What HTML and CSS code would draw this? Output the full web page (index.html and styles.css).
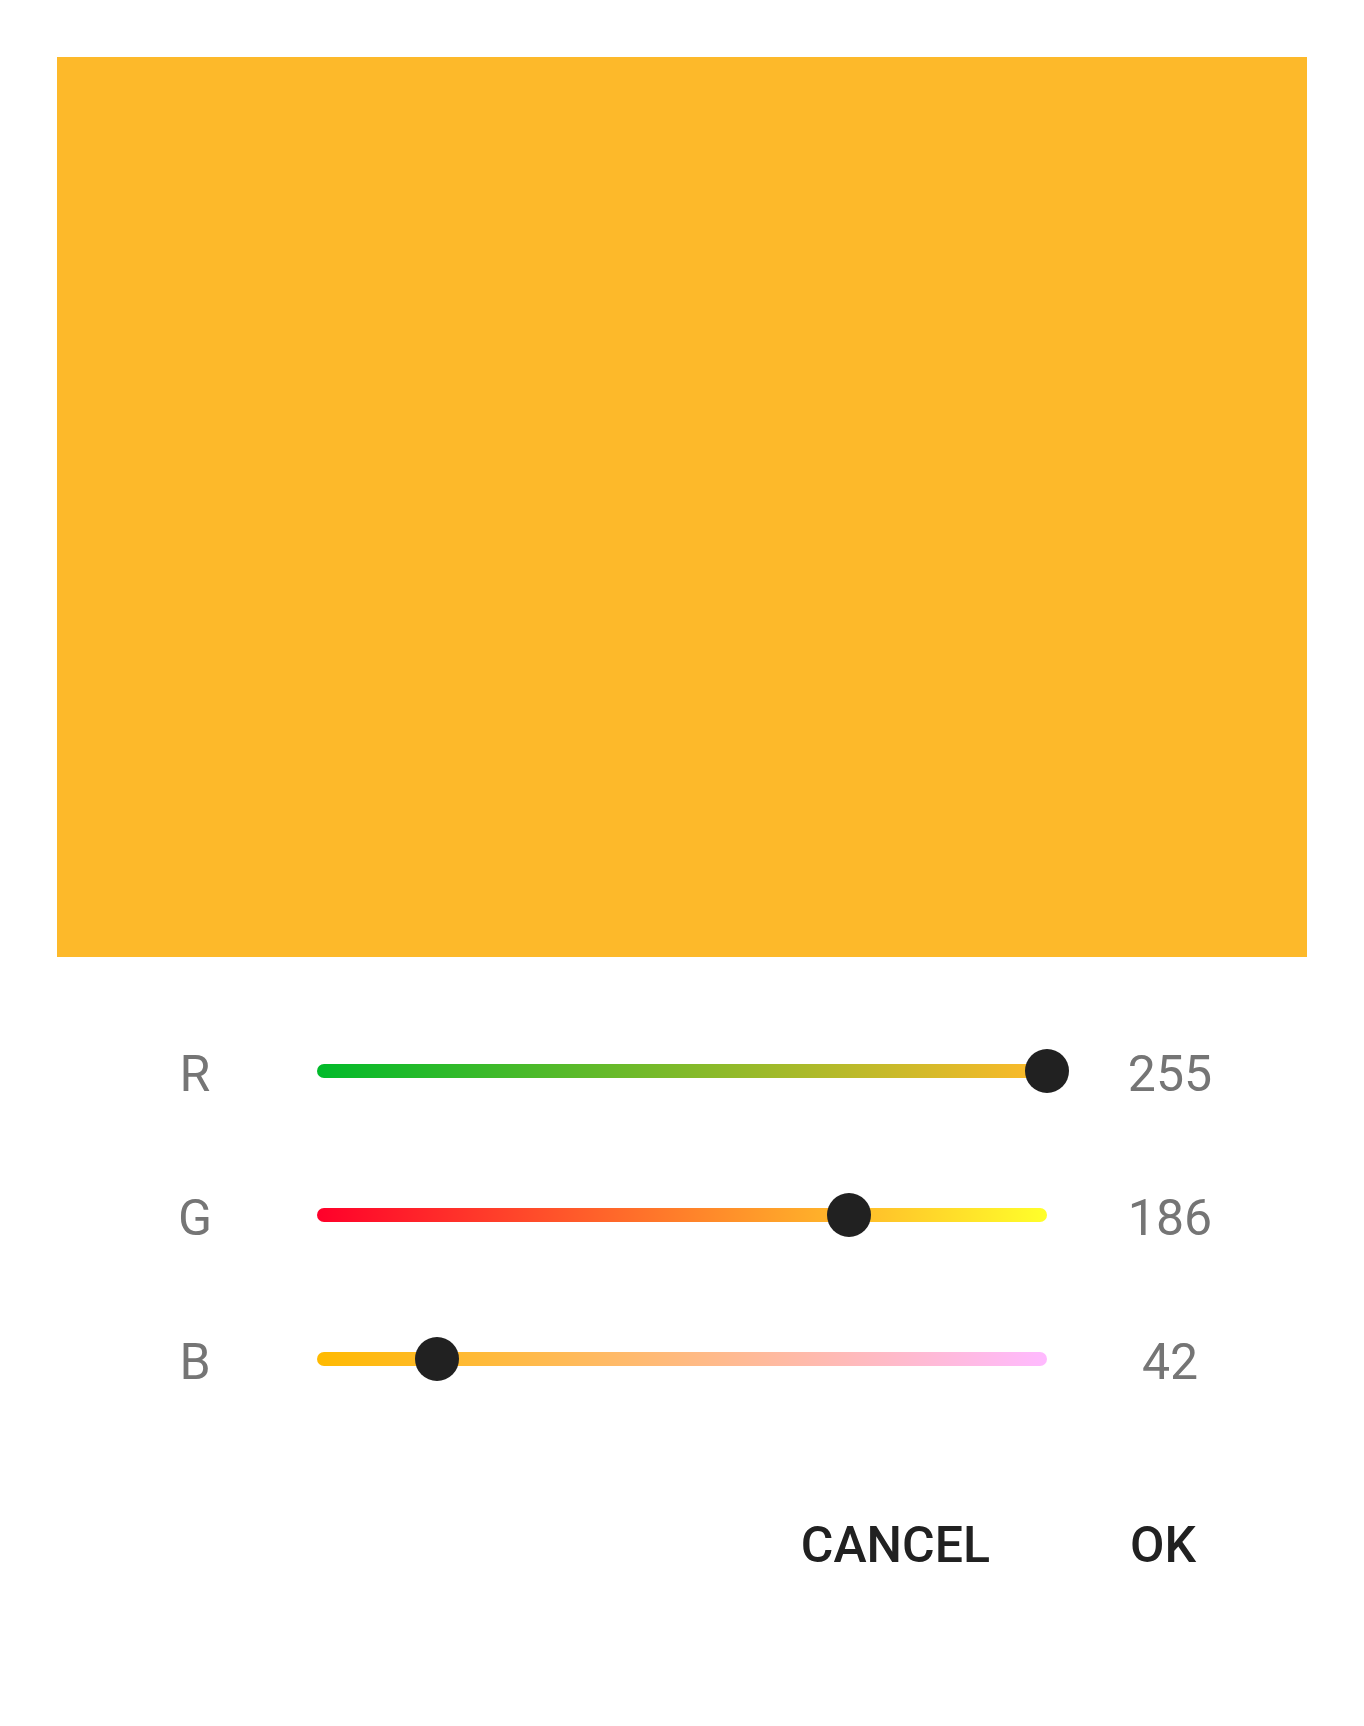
FILE: index.html
```html
<!DOCTYPE html>
<html>
<head>
<meta charset="utf-8">
<link rel="stylesheet" href="styles.css">
</head>
<body>
<div class="dialog">
  <div class="preview"></div>
  <div class="sliders">
    <div class="row">
      <span class="label">R</span>
      <div class="track track-r"><span class="thumb" style="left: 100%"></span></div>
      <span class="value">255</span>
    </div>
    <div class="row">
      <span class="label">G</span>
      <div class="track track-g"><span class="thumb" style="left: 72.94%"></span></div>
      <span class="value">186</span>
    </div>
    <div class="row">
      <span class="label">B</span>
      <div class="track track-b"><span class="thumb" style="left: 16.47%"></span></div>
      <span class="value">42</span>
    </div>
  </div>
  <div class="actions">
    <span class="btn">CANCEL</span>
    <span class="btn">OK</span>
  </div>
</div>
</body>
</html>
```
FILE: styles.css
```css
html, body {
  margin: 0;
  padding: 0;
  background: #ffffff;
}
body {
  font-family: Roboto, "Liberation Sans", sans-serif;
}
.dialog {
  width: 1364px;
  height: 1726px;
}
.preview {
  margin: 57px 57px 0 57px;
  width: 1250px;
  height: 900px;
  background: #FDB92A;
}
.sliders {
  padding-top: 42px;
}
.row {
  display: flex;
  align-items: center;
  height: 144px;
  padding-left: 139px;
}
.label, .value {
  font-size: 50px;
  color: #757575;
  text-align: center;
  padding-top: 5px;
}
.label {
  width: 112px;
  margin-right: 66px;
}
.value {
  width: 246px;
}
.track {
  position: relative;
  width: 730px;
  height: 14px;
  border-radius: 7px;
}
.track-r { background: linear-gradient(to right, rgb(0,186,42), rgb(255,186,42)); }
.track-g { background: linear-gradient(to right, rgb(255,0,42), rgb(255,255,42)); }
.track-b { background: linear-gradient(to right, rgb(255,186,0), rgb(255,186,255)); }
.thumb {
  position: absolute;
  top: 50%;
  width: 44px;
  height: 44px;
  margin-left: -22px;
  margin-top: -22px;
  border-radius: 50%;
  background: #212121;
}
.actions {
  display: flex;
  justify-content: flex-end;
  gap: 140px;
  padding-right: 168px;
  margin-top: 84px;
}
.btn {
  font-size: 50px;
  line-height: 60px;
  font-weight: 500;
  color: #212121;
}
```
